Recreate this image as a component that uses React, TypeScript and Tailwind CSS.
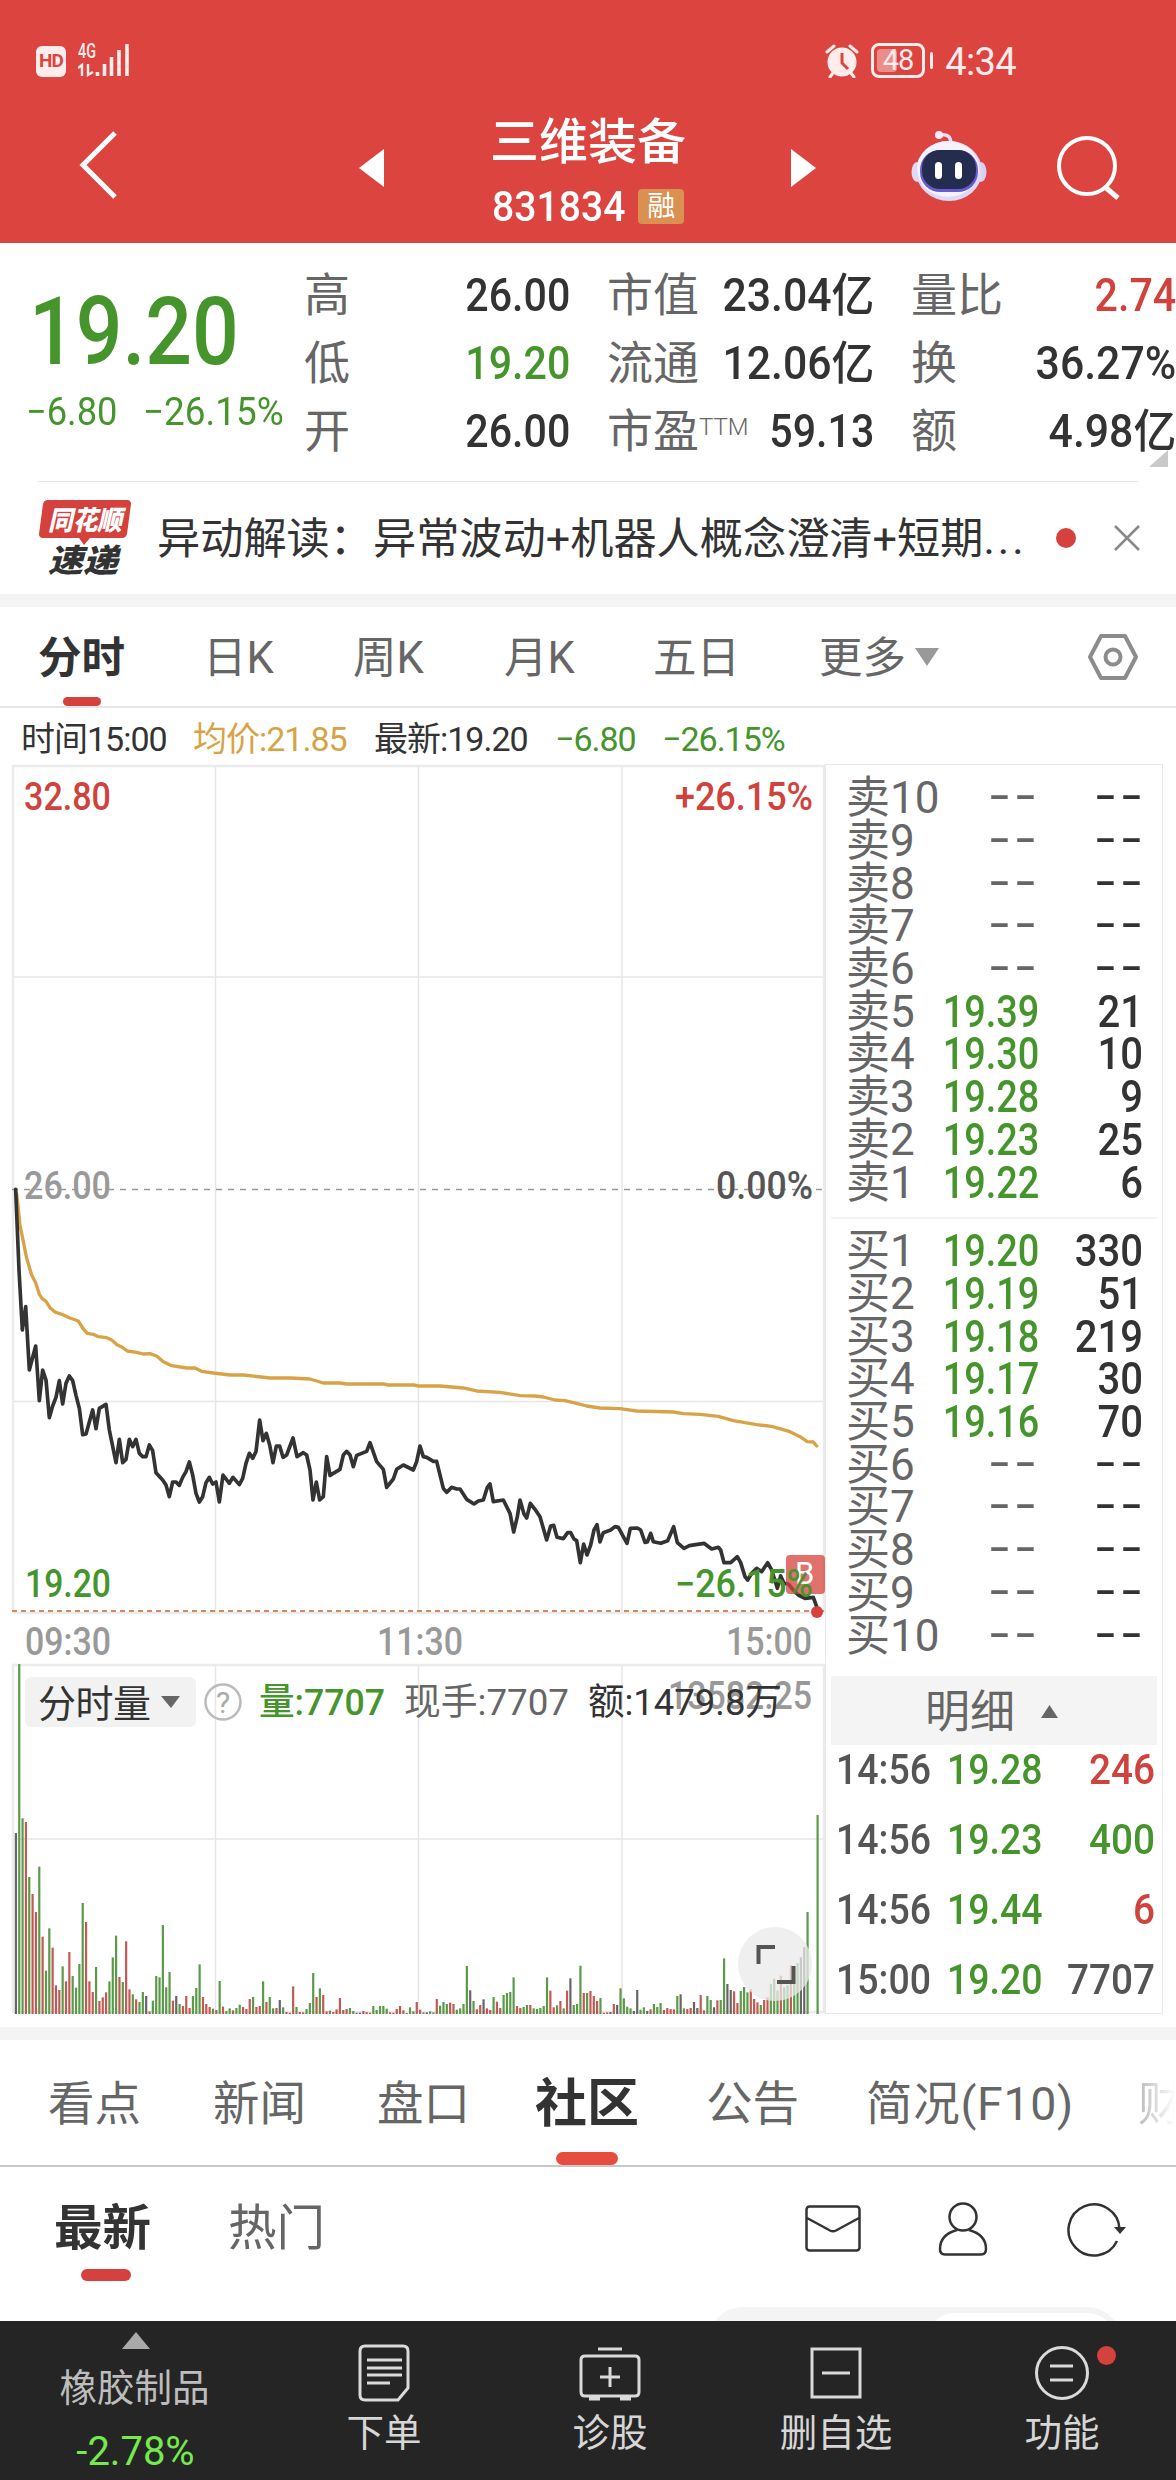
import type { ReactNode } from 'react';
import clsx from 'clsx';

const GREEN = '#45952c';
const RED = '#cf433c';

const quoteRows = [
  [
    { label: '高', value: '26.00', color: 'text-[#333]' },
    { label: '市值', value: '23.04亿', color: 'text-[#333]' },
    { label: '量比', value: '2.74', color: 'text-[#cf433c]' },
  ],
  [
    { label: '低', value: '19.20', color: 'text-[#45952c]' },
    { label: '流通', value: '12.06亿', color: 'text-[#333]' },
    { label: '换', value: '36.27%', color: 'text-[#333]' },
  ],
  [
    { label: '开', value: '26.00', color: 'text-[#333]' },
    { label: '市盈', sup: 'TTM', value: '59.13', color: 'text-[#333]' },
    { label: '额', value: '4.98亿', color: 'text-[#333]' },
  ],
];

const asks = [
  ['卖10', '', ''],
  ['卖9', '', ''],
  ['卖8', '', ''],
  ['卖7', '', ''],
  ['卖6', '', ''],
  ['卖5', '19.39', '21'],
  ['卖4', '19.30', '10'],
  ['卖3', '19.28', '9'],
  ['卖2', '19.23', '25'],
  ['卖1', '19.22', '6'],
];

const bids = [
  ['买1', '19.20', '330'],
  ['买2', '19.19', '51'],
  ['买3', '19.18', '219'],
  ['买4', '19.17', '30'],
  ['买5', '19.16', '70'],
  ['买6', '', ''],
  ['买7', '', ''],
  ['买8', '', ''],
  ['买9', '', ''],
  ['买10', '', ''],
];

const trades = [
  { time: '14:56', price: '19.28', volume: '246', color: 'text-[#cf433c]' },
  { time: '14:56', price: '19.23', volume: '400', color: 'text-[#45952c]' },
  { time: '14:56', price: '19.44', volume: '6', color: 'text-[#cf433c]' },
  { time: '15:00', price: '19.20', volume: '7707', color: 'text-[#555]' },
];

// Chart geometry is stored in 1/3 px units
const priceLine =
  '47,88 57,330 67,510 77,440 88,630 107,558 118,722 128,630 138,660 148,773 158,738 168,712 178,662 188,732 198,670 208,648 218,662 228,706 238,745 248,824 258,822 278,750 288,806 298,745 318,733 328,810 348,908 358,838 368,908 378,898 388,838 398,860 408,838 418,880 428,890 438,890 448,855 458,872 468,938 488,960 498,975 508,1010 518,966 528,966 538,976 548,952 558,935 568,906 578,945 588,1000 598,1026 608,1010 618,968 628,952 638,972 648,966 658,1026 669,945 688,970 699,952 718,974 728,955 738,910 748,880 758,895 768,875 779,780 789,842 799,820 809,855 819,908 829,858 839,858 849,892 860,885 879,834 891,890 910,878 920,885 930,930 939,1020 949,966 959,1020 970,1010 980,890 990,946 1020,928 1030,885 1040,874 1050,885 1060,920 1070,886 1100,874 1110,848 1130,905 1150,928 1160,982 1180,957 1190,928 1210,915 1240,930 1250,905 1260,858 1270,890 1280,892 1300,904 1310,904 1330,985 1340,997 1355,982 1370,987 1380,987 1400,1018 1422,1032 1435,1023 1450,1020 1462,982 1470,972 1480,1025 1510,1020 1530,1060 1541,1116 1552,1070 1560,1020 1572,1062 1580,1074 1591,1030 1605,1048 1620,1070 1640,1140 1652,1098 1661,1096 1671,1132 1690,1136 1703,1118 1712,1118 1722,1137 1730,1142 1741,1208 1751,1152 1761,1185 1772,1155 1782,1110 1791,1094 1800,1146 1810,1118 1832,1110 1845,1100 1855,1102 1881,1150 1891,1105 1912,1104 1922,1110 1935,1147 1942,1146 1952,1120 1960,1145 1982,1150 2003,1142 2021,1100 2032,1148 2052,1165 2068,1157 2112,1150 2135,1167 2155,1162 2162,1170 2172,1208 2192,1208 2212,1190 2222,1208 2235,1250 2243,1260 2255,1240 2270,1225 2285,1235 2303,1208 2315,1230 2332,1285 2342,1248 2352,1270 2365,1272 2380,1290 2395,1305 2415,1315 2440,1312 2450,1340 2451,1354';

const averageLine =
  '50,100 60,195 70,245 80,295 95,345 107,368 118,403 126,415 138,424 150,443 165,456 185,463 210,474 235,483 250,507 262,520 280,523 295,530 320,533 335,540 352,555 367,562 382,573 410,577 430,582 450,581 470,588 490,605 515,617 560,624 585,624 605,634 640,639 690,645 730,645 810,654 870,654 930,657 970,669 1020,669 1040,672 1150,672 1165,675 1240,675 1256,678 1320,678 1390,684 1430,693 1500,697 1560,707 1605,708 1630,711 1665,720 1695,722 1730,730 1760,738 1800,744 1860,746 1910,753 2020,756 2050,761 2100,763 2155,769 2200,782 2270,794 2315,799 2370,815 2400,830 2422,845 2440,846 2450,858';

// One entry per minute: g = down, r = up, k = unchanged, then the bar height
const volumes =
  'k543 g1050 g587 r576 g411 r360 r306 g442 r232 g130 g257 r199 r86 r72 g143 r98 r186 g114 g79 g150 g333 r276 r98 r66 g141 r39 r50 r65 g98 g170 g235 r111 g96 r218 r74 g59 r44 g36 g66 k54 r8 g40 g114 g110 g267 g80 g126 r40 k54 g30 r24 r54 r18 g54 g78 g149 r51 r30 r21 g16 r12 g99 r22 g9 g17 r11 g18 g28 r21 r15 r45 g51 r21 r24 g98 r36 g51 g17 r18 k42 g20 r6 r4 r83 g21 r6 r5 g15 g33 g123 r51 g77 r57 r8 g10 r6 r14 r48 r12 r15 g18 g9 r4 k4 r9 r6 r4 g24 g12 g24 g24 g16 r5 r4 r15 r24 r11 g3 g20 g8 r36 r13 g5 k5 g8 g5 r45 g25 g36 g30 r34 r30 g13 g17 g30 g144 k71 g39 r14 r27 k44 r17 r12 g51 r37 r18 g57 g63 g66 g110 r24 r18 g21 g27 r27 g17 g15 g18 g24 g110 r70 r20 g26 r39 g17 r70 k107 g27 g30 g145 r63 g63 r69 r54 r39 g48 r4 r5 k6 r30 k27 g77 g47 g22 g17 k9 k72 g13 g20 k9 r14 g30 g21 g33 r12 r18 r15 r14 g54 k59 g17 r15 r18 k36 k18 r57 r11 g54 g42 k20 r41 g42 g167 k90 k72 r68 r33 g69 g81 g65 r74 r45 r35 g27 r42 r50 g90 g106 g70 r115 g80 g86 r146 g130 g153 k170 k201 g306 g0 g0 g597'.split(
    ' ',
  );

const barColors: Record<string, string> = { g: '#5b9a49', r: '#c25a53', k: '#666' };

function StatusBar() {
  return (
    <div className="flex h-[122px] items-start justify-between pt-[42px] pr-[160px] pl-9 text-[#ffeceb]">
      <div className="flex">
        <div className="mt-1 flex h-[31px] w-[30px] items-center justify-center rounded-md bg-[#ffeceb] text-[19px] font-bold tracking-[-1px] text-[#dc4440]">
          HD
        </div>
        <svg className="ml-3" width="54" height="36" fill="none" stroke="currentColor">
          <text x="0" y="16" fontSize="20" fontWeight="500" textLength="18" lengthAdjust="spacingAndGlyphs" fill="currentColor" stroke="none">
            4G
          </text>
          <path d="M0 26l4-3v11M10 22v11l5-3" strokeWidth="2.4" />
          <path d="M19.5 30v4M26.5 22v12M33.5 15v19M41 8v26M49 2v32" strokeWidth="3.6" />
        </svg>
      </div>
      <div className="flex items-start">
        <svg width="34" height="36" viewBox="0 0 34 36">
          <circle cx="17" cy="20" r="14.5" fill="currentColor" />
          <path d="M2 10l7-6M32 10l-7-6M8 31l-3 4M26 31l3 4" stroke="currentColor" strokeWidth="3" strokeLinecap="round" />
          <path d="M17 11v10l6 6" stroke="#dc4440" strokeWidth="3" fill="none" />
        </svg>
        <div className="relative mt-px ml-3 flex h-[35px] w-[54px] items-center justify-center rounded-lg border-[3px] border-current text-[29px]">
          <div className="absolute top-[3px] left-[3px] h-[23px] w-5 rounded-sm bg-white/40"></div>
          <span className="relative tracking-[-1px]">48</span>
        </div>
        <div className="mt-[10px] ml-[5px] h-[17px] w-[3px] rounded bg-current"></div>
        <span className="ml-3 text-[38px] leading-[40px] tracking-[-0.6px]">4:34</span>
      </div>
    </div>
  );
}

function Robot() {
  return (
    <svg width="76" height="72" viewBox="0 0 76 72">
      <path d="M40 14c0-8-4-10-11-9" fill="none" stroke="#e9ddf8" strokeWidth="3.5" />
      <circle cx="28" cy="5" r="4" fill="#f7ecf6" />
      <ellipse cx="6" cy="42" rx="5.5" ry="10" fill="#e0daf6" />
      <ellipse cx="70" cy="42" rx="5.5" ry="10" fill="#d6cff2" />
      <ellipse cx="38" cy="41" rx="33" ry="30" fill="#dcd8f6" />
      <ellipse cx="37" cy="39" rx="31" ry="28" fill="#f4f2ff" />
      <rect x="9" y="20" width="58" height="42" rx="20" fill="#6a5ad0" />
      <rect x="11" y="20" width="54" height="39" rx="18" fill="#242d50" />
      <rect x="24" y="32" width="7" height="17" rx="3.5" fill="#fff" />
      <rect x="44" y="32" width="7" height="17" rx="3.5" fill="#fff" />
    </svg>
  );
}

function TitleBar() {
  return (
    <div className="flex h-[121px] items-start text-white">
      <svg className="mt-[8px] ml-[78px]" width="42" height="70" fill="none" stroke="currentColor" strokeWidth="5">
        <path d="M37 3L5 35L37 67" />
      </svg>
      <svg className="mt-[27px] ml-[239px]" width="25" height="38" fill="currentColor">
        <path d="M25 0V38L0 19z" />
      </svg>
      <div className="ml-[84px] flex w-[240px] flex-col items-center">
        <div className="-mt-[8px] text-[49px] leading-[58px] font-medium">三维装备</div>
        <div className="mt-[14px] flex items-center">
          <span className="-mr-[14px] inline-block origin-left scale-x-[0.91] text-[43px] leading-[40px] font-medium">831834</span>
          <span className="ml-[14px] flex h-[35px] w-[46px] items-center justify-center rounded bg-[#d99050] pt-px text-[28px]">
            融
          </span>
        </div>
      </div>
      <svg className="mt-[27px] ml-[83px]" width="25" height="38" fill="currentColor">
        <path d="M0 0V38L25 19z" />
      </svg>
      <div className="mt-[8px] ml-[95px]">
        <Robot />
      </div>
      <svg className="mt-[12px] ml-[69px]" width="66" height="66" fill="none" stroke="currentColor" strokeWidth="4">
        <circle cx="31" cy="32" r="28" />
        <path d="M49 53L62 64" strokeWidth="5" />
      </svg>
    </div>
  );
}

function QuoteSummary() {
  return (
    <div className="relative flex h-[238px]">
      <div className="w-[304px] whitespace-nowrap text-[#45952c]">
        <div className="mt-[39px] ml-[29px] w-[236px] origin-left scale-x-[0.875] text-[94px] leading-[100px] font-medium">19.20</div>
        <div className="mt-[8px] ml-[26px] flex text-[39px] leading-[44px]">
          <span className="w-[117px] origin-left scale-x-[0.93]">−6.80</span>
          <span className="origin-left scale-x-[0.945]">−26.15%</span>
        </div>
      </div>
      <div className="flex w-[872px] flex-col pt-[18px] text-[46px] leading-[68px]">
        {quoteRows.map((row, i) => (
          <div key={i} className="grid h-[68px] grid-cols-[266px_267px_265px] gap-x-[37px]">
            {row.map((cell) => (
              <div key={cell.label} className="flex justify-between whitespace-nowrap">
                <span className="text-[#666]">
                  {cell.label}
                  {cell.sup && <span className="relative -top-3 text-[24px] font-light">{cell.sup}</span>}
                </span>
                <span
                  className={clsx(
                    '-ml-4 origin-right font-medium',
                    cell.value.length > 5 || cell.value.endsWith('亿') ? 'scale-x-[0.93]' : 'scale-x-[0.895]',
                    cell.color,
                  )}
                >
                  {cell.value}
                </span>
              </div>
            ))}
          </div>
        ))}
      </div>
      <svg className="absolute top-[207px] left-[1149px]" width="19" height="17" fill="#c9c9c9">
        <path d="M19 0V17H0z" />
      </svg>
    </div>
  );
}

function NewsBanner() {
  return (
    <div className="flex h-[112px] items-center">
      <svg className="ml-[39px]" width="94" height="76" fontWeight="900" fontStyle="italic">
        <path d="M9 0H88q4 0 4 4L88 34q-1 4-5 4H51L45 45L40 38H4q-4 0-4-4L4 4Q5 0 9 0z" fill="#d5413c" />
        <text x="9" y="30" fontSize="27" textLength="74" lengthAdjust="spacingAndGlyphs" fill="#fff">
          同花顺
        </text>
        <text x="9" y="72" fontSize="32" textLength="70" lengthAdjust="spacingAndGlyphs" fill="#333">
          速递
        </text>
      </svg>
      <div className="mt-[3px] ml-[24px] w-[870px] text-[43.200px] leading-[60px] whitespace-nowrap text-[#333]">
        异动解读：异常波动+机器人概念澄清+短期<span className="tracking-[3px]">...</span>
      </div>
      <div className="ml-[29px] size-5 rounded-full bg-[#d5413c]"></div>
      <svg className="ml-[38px]" width="26" height="26" stroke="#888" strokeWidth="2.5">
        <path d="M1 1L25 25M25 1L1 25" />
      </svg>
    </div>
  );
}

function PeriodTabs() {
  return (
    <div className="relative flex h-[101px] items-center border-b-2 border-[#e7e7e7] pt-[4px] text-[43.500px] text-[#666]">
      <span className="ml-[38px] w-[165px] font-bold text-[#333]">分时</span>
      <span className="w-[150px]">日K</span>
      <span className="w-[151px]">周K</span>
      <span className="w-[149px]">月K</span>
      <span className="w-[166px]">五日</span>
      <span className="w-[96px]">更多</span>
      <svg className="-mt-[3px]" width="24" height="18" fill="#999">
        <path d="M0 0H24L12 18z" />
      </svg>
      <svg className="-mt-[3px] ml-[148px]" width="52" height="48" fill="none" stroke="#8c8c8c" strokeWidth="4">
        <path d="M14 3H38L49 24L38 45H14L3 24z" strokeLinejoin="round" />
        <circle cx="26" cy="24" r="7.500" />
      </svg>
      <div className="absolute bottom-0 left-[63px] h-[9px] w-[38px] rounded-full bg-[#d5413c]"></div>
    </div>
  );
}

function InfoRow() {
  return (
    <div className="flex h-[56px] items-center pt-[7px] text-[34px] tracking-[-1px] whitespace-nowrap text-[#333]">
      <span className="ml-[21px] w-[172px]">时间15:00</span>
      <span className="w-[181px] text-[#d8a346]">均价:21.85</span>
      <span className="w-[181px]">最新:19.20</span>
      <span className="w-[107px] text-[#45952c]">−6.80</span>
      <span className="text-[#45952c]">−26.15%</span>
    </div>
  );
}

type LabelProps = { x: number; y: number; width: number; fill: string; children: ReactNode };

function Label({ x, y, width, fill, children }: LabelProps) {
  return (
    <text x={x} y={y} fontSize="38" textLength={width} lengthAdjust="spacingAndGlyphs" fill={fill} fontWeight="500">
      {children}
    </text>
  );
}

function Charts() {
  return (
    <svg className="shrink-0" width="825" height="1250" viewBox="0 764 825 1250">
      {/* Grid */}
      <g stroke="#e6e6e6" strokeWidth="1.500" fill="none">
        <path d="M215.500 766V1613M418.500 766V1613M622 766V1613M215.500 1664V2013M418.500 1664V2013M622 1664V2013" />
        <path d="M13 977H824M13 1401.500H824M13 1839H824" />
      </g>
      <path d="M13 1613V766H824V1613H13M13 2012V1665H824V2012z" stroke="#ebebeb" strokeWidth="2.500" fill="none" />
      <path d="M12 1189.500H824" stroke="#999" strokeWidth="1.500" strokeDasharray="6 6" />
      <path d="M12 1611H824" stroke="#d08a60" strokeWidth="2" strokeDasharray="5 4" />

      <Label x={24} y={810} width={87} fill={RED}>32.80</Label>
      <Label x={675} y={810} width={138} fill={RED}>+26.15%</Label>
      <Label x={24} y={1199} width={87} fill="#999">26.00</Label>
      <Label x={716} y={1199} width={97} fill="#555">0.00%</Label>
      <Label x={25} y={1597} width={86} fill={GREEN}>19.20</Label>

      <g transform="translate(0 1160) scale(0.33333)" fill="none" strokeLinejoin="round" strokeLinecap="round">
        <polyline points={averageLine} stroke="#d8a346" strokeWidth="10" />
        <polyline points={priceLine} stroke="#333" strokeWidth="11" />
      </g>

      {/* Buy marker at the close */}
      <circle cx="817" cy="1612" r="6" fill="#d5413c" />
      <rect x="786" y="1555" width="39" height="39" rx="4" fill="#d5413c" opacity="0.750" />
      <text x="795" y="1584" fontSize="31" fill="#fff">B</text>
      <Label x={675} y={1597} width={138} fill={GREEN}>−26.15%</Label>

      <Label x={25} y={1655} width={86} fill="#999">09:30</Label>
      <Label x={377} y={1655} width={86} fill="#999">11:30</Label>
      <Label x={726} y={1655} width={86} fill="#999">15:00</Label>

      {/* Volume */}
      <Label x={668} y={1709} width={144} fill="#999">13582.25</Label>
      {volumes.map((v, i) => {
        const height = Number(v.slice(1)) / 3;
        return (
          <rect
            key={i}
            x={14.8 + (i * 801.7) / (volumes.length - 1)}
            y={2014 - height}
            width="2.200"
            height={height}
            fill={barColors[v[0]]}
          />
        );
      })}
      <rect x="25" y="1677" width="171" height="50" rx="6" fill="#f2f2f2" />
      <text x="38" y="1717" fontSize="38" textLength="113" fill="#333">分时量</text>
      <path d="M161 1696H180L171 1708z" fill="#666" />
      <circle cx="223" cy="1702" r="17.500" fill="none" stroke="#bbb" strokeWidth="2.500" />
      <text x="223" y="1713" fontSize="30" textAnchor="middle" fill="#aaa">?</text>
      <text x="259" y="1715" fontSize="37" textLength="126" lengthAdjust="spacingAndGlyphs" fill={GREEN} fontWeight="500">量:7707</text>
      <text x="404" y="1715" fontSize="37" textLength="165" lengthAdjust="spacingAndGlyphs" fill="#666">现手:7707</text>
      <text x="588" y="1715" fontSize="37" textLength="194" lengthAdjust="spacingAndGlyphs" fill="#333">额:1479.8万</text>

      <circle cx="775" cy="1964" r="37" fill="#e9e9e9" opacity="0.750" />
      <path d="M758.500 1964V1947H775M777 1982H793.500V1966" fill="none" stroke="#555" strokeWidth="4" />
    </svg>
  );
}

function Dashes({ className }: { className: string }) {
  return (
    <span className={clsx('relative top-[-4px] origin-right scale-x-[1.400] font-["Liberation_Sans"] text-[48px] font-normal tracking-[2.600px]', className)}>
      --
    </span>
  );
}

function BookRows({ rows }: { rows: string[][] }) {
  return (
    <div className="flex h-[427px] flex-col pr-[19px] pl-[20px]">
      {rows.map(([label, price, volume]) => (
        <div key={label} className="flex h-[42.700px] shrink-0 items-center text-[44px] leading-[42px]">
          <span className="w-[95px] text-[#666]">{label}</span>
          <span className="flex w-[98px] justify-end text-[#45952c]">
            {price ? <span className="origin-right scale-x-[0.860] font-medium">{price}</span> : <Dashes className="-mr-[1px] text-[#666]" />}
          </span>
          <span className="flex flex-1 justify-end text-[#333]">
            {volume ? <span className="origin-right scale-x-[0.910] font-medium">{volume}</span> : <Dashes className="-mr-[3px] text-[#333]" />}
          </span>
        </div>
      ))}
    </div>
  );
}

function OrderBook() {
  return (
    <div className="flex h-[1250px] w-[338px] flex-col border border-[#e8e8e8]">
      <div className="mt-[12px] shrink-0">
        <BookRows rows={asks} />
      </div>
      <div className="mx-[5px] mt-[13px] h-[2px] shrink-0 bg-[#f3f3f3]"></div>
      <div className="mt-[11px] shrink-0">
        <BookRows rows={bids} />
      </div>
      <div className="mx-[5px] mt-[19px] flex h-[69px] shrink-0 items-center bg-[#f4f4f4] pt-[5px] pl-[94px] text-[45px] text-[#666]">
        明细
        <svg className="-mt-[4px] ml-[26px]" width="17" height="13" fill="#666">
          <path d="M8.500 0L17 13H0z" />
        </svg>
      </div>
      <div className="-mt-[11px] flex shrink-0 flex-col">
        {trades.map((t, i) => (
          <div key={i} className="flex h-[70px] items-center pr-[7px] pl-[10px] text-[43px] font-medium">
            <span className="w-[111px] origin-left scale-x-[0.870] text-[#555]">{t.time}</span>
            <span className="w-[102px] origin-left scale-x-[0.870] text-[#45952c]">{t.price}</span>
            <span className={clsx('flex-1 origin-right scale-x-[0.900] text-right', t.color)}>{t.volume}</span>
          </div>
        ))}
      </div>
    </div>
  );
}

function SectionTabs() {
  return (
    <div className="relative flex h-[127px] items-center overflow-hidden border-b-2 border-[#c8c8c8] pt-[5px] text-[46.500px] whitespace-nowrap text-[#666]">
      <span className="ml-[48px] w-[165px] shrink-0">看点</span>
      <span className="w-[164px] shrink-0">新闻</span>
      <span className="w-[158px] shrink-0">盘口</span>
      <span className="w-[171px] shrink-0 text-[52px] font-bold text-[#333]">社区</span>
      <span className="w-[160px] shrink-0">公告</span>
      <span className="w-[272px] shrink-0 tracking-[0.700px]">简况(F10)</span>
      <span className="shrink-0 bg-linear-to-r from-[#bbb] to-white to-80% bg-clip-text text-transparent">财</span>
      <div className="absolute bottom-0 left-[556px] h-[13px] w-[62px] rounded-full bg-[#e64c3f]"></div>
    </div>
  );
}

function CommunityBar() {
  return (
    <div className="flex h-[154px] flex-col overflow-hidden">
      <div className="relative flex h-[140px] shrink-0 items-start pt-[27px] text-[48.500px] leading-[70px] text-[#666]">
        <span className="ml-[54px] w-[174px] font-bold text-[#333]">最新</span>
        <span className="w-[577px]">热门</span>
        <svg className="mt-[11px]" width="56" height="47" fill="none" stroke="#333" strokeWidth="2.500">
          <rect x="1.500" y="1.500" width="53" height="44" rx="3" />
          <path d="M2 13L25 25.500Q28 27 31 25.500L54 13" />
        </svg>
        <svg className="mt-[8px] ml-[77px]" width="50" height="54" fill="none" stroke="#333" strokeWidth="2.500">
          <circle cx="25" cy="15" r="13.500" />
          <path d="M19 28C8 31 2 38 2 47Q2 52.500 7 52.500H43Q48 52.500 48 47C48 38 42 31 31 28" />
        </svg>
        <svg className="mt-[8px] ml-[79px]" width="60" height="56" fill="none" stroke="#333" strokeWidth="2.500">
          <path d="M50 39A25.500 25.500 0 1 1 52.500 27" />
          <path d="M47 25H59L53 32z" fill="#333" stroke="none" />
        </svg>
        <div className="absolute top-[102px] left-[81px] h-[12px] w-[50px] rounded-full bg-[#d5413c]"></div>
      </div>
      <div className="ml-[708px] flex h-[70px] w-[414px] shrink-0 justify-end rounded-full bg-[#f4f4f4] p-[6px]">
        <div className="w-[190px] rounded-full bg-white"></div>
      </div>
    </div>
  );
}

function NavItem({ label, children }: { label: string; children: ReactNode }) {
  return (
    <div className="flex w-[226px] flex-col items-center">
      <svg className="mt-[22px]" width="64" height="60" fill="none" stroke="#dadada" strokeWidth="3">
        {children}
      </svg>
      <span className="mt-[6px] text-[37.500px] leading-[48px] text-[#d6d6d6]">{label}</span>
    </div>
  );
}

function BottomNav() {
  return (
    <div className="relative flex h-[159px] bg-[#252525]">
      <div className="flex w-[271px] shrink-0 flex-col items-center pt-[11px]">
        <svg width="28" height="17" fill="#aaa">
          <path d="M14 0L28 17H0z" />
        </svg>
        <span className="mt-[16px] -ml-[2px] text-[37.500px] leading-[46px] text-[#bdbdbd]">橡胶制品</span>
        <span className="mt-[18px] text-[40px] leading-[46px] text-[#74ea4e]">-2.78%</span>
      </div>
      <NavItem label="下单">
        <path d="M13 3H51Q56 3 56 8V45L46 57H13Q8 57 8 52V8Q8 3 13 3zM15 17H50M15 25H50M15 32H50M15 40H38" />
      </NavItem>
      <NavItem label="诊股">
        <path d="M7 13H57Q61 13 61 17V49Q61 53 57 53H7Q3 53 3 49V17Q3 13 7 13zM20 6H44M32 24V44M22 34H42" />
        <path d="M11 55.500H22M42 55.500H53" strokeWidth="4" />
      </NavItem>
      <NavItem label="删自选">
        <path d="M8 6H56V54H8zM18 30H46" />
      </NavItem>
      <NavItem label="功能">
        <circle cx="32" cy="30" r="25.500" />
        <path d="M20 23H43M20 37H43" />
      </NavItem>
      <div className="absolute top-[25px] left-[1097px] size-[19px] rounded-full bg-[#d5413c]"></div>
    </div>
  );
}

export default function App() {
  return (
    <div className="flex h-[2480px] w-[1176px] flex-col overflow-hidden bg-white font-['Roboto','Noto_Sans_CJK_SC',sans-serif]">
      <div className="h-[243px] bg-[#dc4440]">
        <StatusBar />
        <TitleBar />
      </div>
      <QuoteSummary />
      <div className="mx-[38px] h-px bg-[#e8e8e8]"></div>
      <NewsBanner />
      <div className="h-[13px] bg-[#f4f4f4]"></div>
      <PeriodTabs />
      <InfoRow />
      <div className="flex h-[1250px]">
        <Charts />
        <OrderBook />
      </div>
      <div className="mt-[13px] h-[13px] bg-[#f4f4f4]"></div>
      <SectionTabs />
      <CommunityBar />
      <BottomNav />
    </div>
  );
}
